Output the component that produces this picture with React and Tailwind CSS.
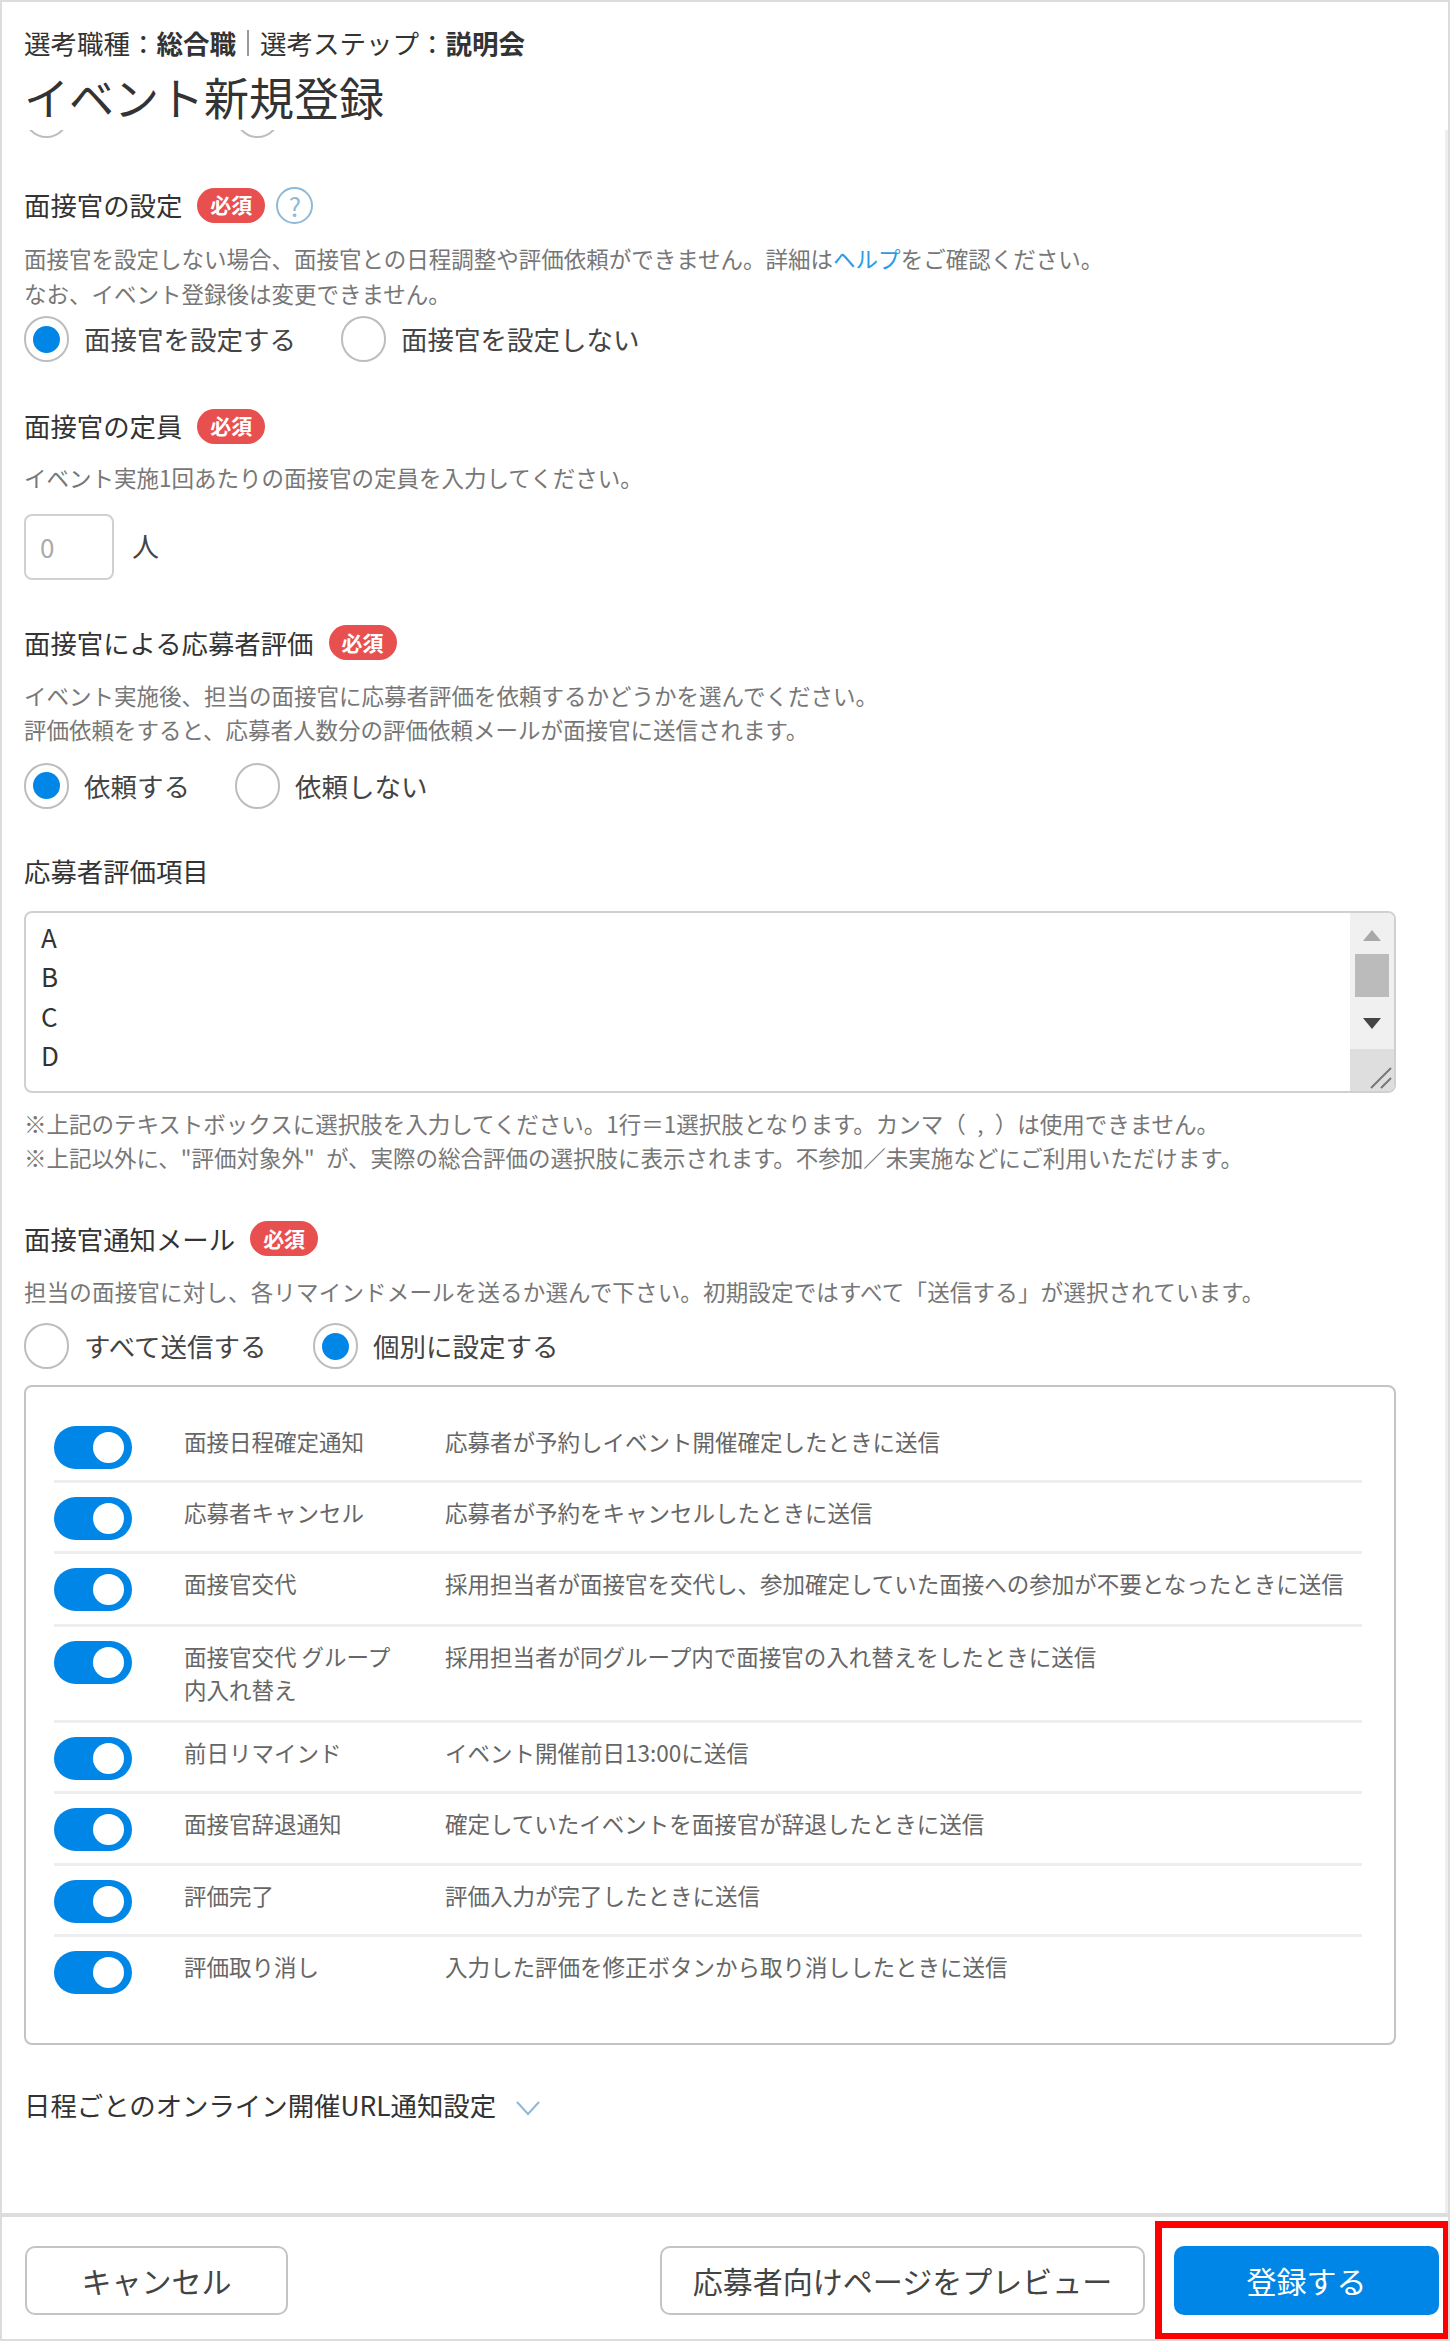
const rows = [
  { label: '面接日程確定通知', desc: '応募者が予約しイベント開催確定したときに送信', pb: 'pb-[11px]' },
  { label: '応募者キャンセル', desc: '応募者が予約をキャンセルしたときに送信', pb: 'pb-[11px]' },
  { label: '面接官交代', desc: '採用担当者が面接官を交代し、参加確定していた面接への参加が不要となったときに送信', pb: 'pb-[13px]' },
  { label: '面接官交代 グループ内入れ替え', desc: '採用担当者が同グループ内で面接官の入れ替えをしたときに送信', pb: 'pb-[14px]' },
  { label: '前日リマインド', desc: 'イベント開催前日13:00に送信', pb: 'pb-[11px]' },
  { label: '面接官辞退通知', desc: '確定していたイベントを面接官が辞退したときに送信', pb: 'pb-[12px]' },
  { label: '評価完了', desc: '評価入力が完了したときに送信', pb: 'pb-[11px]' },
  { label: '評価取り消し', desc: '入力した評価を修正ボタンから取り消ししたときに送信', pb: 'pb-[11px]' },
]

function Required() {
  return (
    <span className="ml-[15px] flex h-[35px] w-[68px] items-center justify-center rounded-full bg-[#e84f4f] text-[21px] font-bold text-white">必須</span>
  )
}

function Label({ children, extra }) {
  return (
    <div className="flex h-[36px] items-center">
      <span className="text-[26.4px] leading-[36px] text-[#333]">{children}</span>
      <Required />
      {extra}
    </div>
  )
}

function Desc({ children, className = '' }) {
  return <p className={`text-[22.5px] leading-[34.5px] text-[#777] ${className}`}>{children}</p>
}

function Radio({ checked }) {
  return (
    <span className="flex h-[46px] w-[45px] shrink-0 items-center justify-center rounded-full border-2 border-[#bdbdbd] bg-white">
      {checked && <span className="h-[27px] w-[27px] rounded-full bg-[#0086e6]" />}
    </span>
  )
}

function RadioGroup({ items, className = '' }) {
  return (
    <div className={`flex h-[46px] items-center ${className}`}>
      {items.map(([text, checked, w]) => (
        <div key={text} className={`flex items-center gap-[15px] ${w}`}>
          <Radio checked={checked} />
          <span className="text-[26.5px] leading-[36px] text-[#444] whitespace-nowrap">{text}</span>
        </div>
      ))}
    </div>
  )
}

function Toggle() {
  return (
    <span className="flex h-[43px] w-[78px] shrink-0 items-center justify-end rounded-full bg-[#0086e6] pr-[8px]">
      <span className="h-[31px] w-[31px] rounded-full bg-white" />
    </span>
  )
}

function Button({ children, className }) {
  return (
    <button className={`flex h-[69px] items-center justify-center rounded-[10px] text-[30px] ${className}`}>{children}</button>
  )
}

export default function App() {
  return (
    <div
      className="relative flex h-[2341px] w-[1450px] flex-col overflow-hidden border-x-2 border-y-2 border-[#dcdcdc] bg-white [text-spacing-trim:space-all]"
      style={{ fontFamily: '"Noto Sans CJK JP", "Noto Sans", sans-serif' }}
    >
      {/* header */}
      <div className="h-[128px] shrink-0 pl-[22px] pt-[23px]">
        <div className="flex items-center text-[26.5px] leading-[36px] text-[#333]">
          <span>選考職種：</span>
          <span className="font-bold">総合職</span>
          <span className="mx-[11px] h-[26px] w-[2px] bg-[#999]" />
          <span>選考ステップ：</span>
          <span className="font-bold">説明会</span>
        </div>
        <h1 className="mt-[9px] text-[45px] leading-[54px] font-normal text-[#333]">イベント新規登録</h1>
      </div>

      {/* scrolled form */}
      <div className="min-h-0 flex-1 overflow-hidden border-r-[3px] border-[#eeeeee] pl-[22px]">
        <div className="h-[8px] overflow-hidden">
          <div className="-mt-[38px] flex gap-[166px]">
            <Radio />
            <Radio />
          </div>
        </div>

        <div className="mt-[49px]">
          <Label
            extra={
              <span className="ml-[11px] flex h-[37px] w-[37px] items-center justify-center rounded-full border-2 border-[#8fb9d6] text-[26px] text-[#8fb9d6]">?</span>
            }
          >
            面接官の設定
          </Label>
          <Desc className="mt-[18px]">
            面接官を設定しない場合、面接官との日程調整や評価依頼ができません。詳細は<span className="text-[#2c9be8]">ヘルプ</span>をご確認ください。
            <br />
            なお、イベント登録後は変更できません。
          </Desc>
          <RadioGroup className="mt-[6px]" items={[['面接官を設定する', true, 'w-[317px]'], ['面接官を設定しない', false, '']]} />
        </div>

        <div className="mt-[46px]">
          <Label>面接官の定員</Label>
          <Desc className="mt-[16px]">イベント実施1回あたりの面接官の定員を入力してください。</Desc>
          <div className="mt-[19px] flex items-center gap-[18px]">
            <div className="flex h-[66px] w-[90px] items-center rounded-[8px] border-2 border-[#d0d0d0] pl-[14px] text-[26px] text-[#aaa]">0</div>
            <span className="text-[27px] text-[#444]">人</span>
          </div>
        </div>

        <div className="mt-[45px]">
          <Label>面接官による応募者評価</Label>
          <Desc className="mt-[17px]">
            イベント実施後、担当の面接官に応募者評価を依頼するかどうかを選んでください。
            <br />
            評価依頼をすると、応募者人数分の評価依頼メールが面接官に送信されます。
          </Desc>
          <RadioGroup className="mt-[16px]" items={[['依頼する', true, 'w-[211px]'], ['依頼しない', false, '']]} />
        </div>

        <div className="mt-[44px]">
          <div className="text-[26.4px] leading-[36px] text-[#333]">応募者評価項目</div>
          <div className="mt-[22px] flex h-[182px] w-[1372px] overflow-hidden rounded-[8px] border-2 border-[#d0d0d0]">
            <div className="flex-1 pl-[15px] pt-[4px] text-[26px] leading-[39.5px] text-[#333]">
              <div>A</div>
              <div>B</div>
              <div>C</div>
              <div>D</div>
            </div>
            <div className="flex w-[44px] flex-col items-center">
              <div className="flex h-[136px] w-full flex-col items-center bg-[#f0f0f0] pt-[16px]">
                <svg width="20" height="13" viewBox="0 0 20 13"><path d="M10 1 L19 12 H1 Z" fill="#a8a8a8" /></svg>
                <div className="mt-[12px] h-[43px] w-[34px] bg-[#bbbbbb]" />
                <svg className="mt-[20px]" width="20" height="13" viewBox="0 0 20 13"><path d="M1 1 H19 L10 12 Z" fill="#444" /></svg>
              </div>
              <div className="flex w-full flex-1 items-end justify-end bg-[#dedede] pb-[2px] pr-[2px]">
                <svg width="24" height="24" viewBox="0 0 24 24" stroke="#777" strokeWidth="2"><path d="M3 23 L23 3 M13 23 L23 13" /></svg>
              </div>
            </div>
          </div>
          <Desc className="mt-[13px]">
            ※上記のテキストボックスに選択肢を入力してください。1行＝1選択肢となります。カンマ（{'\u2002'},{'\u2002'}）は使用できません。
            <br />
            ※上記以外に、"評価対象外"{'\u2002'}が、実際の総合評価の選択肢に表示されます。不参加／未実施などにご利用いただけます。
          </Desc>
        </div>

        <div className="mt-[46px]">
          <Label>面接官通知メール</Label>
          <Desc className="mt-[17px] tracking-[0.17px]">担当の面接官に対し、各リマインドメールを送るか選んで下さい。初期設定ではすべて「送信する」が選択されています。</Desc>
          <RadioGroup className="mt-[15px]" items={[['すべて送信する', false, 'w-[289px]'], ['個別に設定する', true, '']]} />
          <div className="mt-[16px] h-[660px] w-[1372px] rounded-[8px] border-2 border-[#c4c4c4] pl-[28px] pr-[32px] pt-[25px]">
            {rows.map((r, i) => (
              <div key={r.label} className={`flex items-start pt-[14px] ${r.pb} ${i < rows.length - 1 ? 'border-b-[3px] border-[#eeeeee]' : ''}`}>
                <Toggle />
                <div className="-mt-[1px] ml-[52px] w-[225px] shrink-0 text-[22.5px] leading-[33px] text-[#666]">{r.label}</div>
                <div className="-mt-[1px] ml-[36px] text-[22.5px] leading-[33px] whitespace-nowrap text-[#666]">{r.desc}</div>
              </div>
            ))}
          </div>
        </div>

        <div className="mt-[42px] flex h-[36px] items-center">
          <span className="text-[26.4px] leading-[36px] text-[#333]">日程ごとのオンライン開催URL通知設定</span>
          <svg className="ml-[20px] mt-[6px]" width="24" height="15" viewBox="0 0 24 15" fill="none" stroke="#8fb9d6" strokeWidth="2"><path d="M1 1 L12 13 L23 1" /></svg>
        </div>
      </div>

      {/* footer */}
      <div className="flex shrink-0 items-center justify-between border-t-4 border-[#dddddd] pb-[24px] pl-[23px] pr-[9px] pt-[29px]">
        <Button className="w-[263px] border-2 border-[#c4c4c4] text-[#444]">キャンセル</Button>
        <div className="flex gap-[29px]">
          <Button className="w-[485px] border-2 border-[#c4c4c4] text-[#444]">応募者向けページをプレビュー</Button>
          <Button className="w-[265px] bg-[#0086e6] text-white">登録する</Button>
        </div>
      </div>

      {/* highlight box drawn on top of the screenshot */}
      <div className="absolute bottom-[-1px] right-[-2px] h-[119px] w-[295px] border-[7px] border-[#ff0000]" />
    </div>
  )
}
